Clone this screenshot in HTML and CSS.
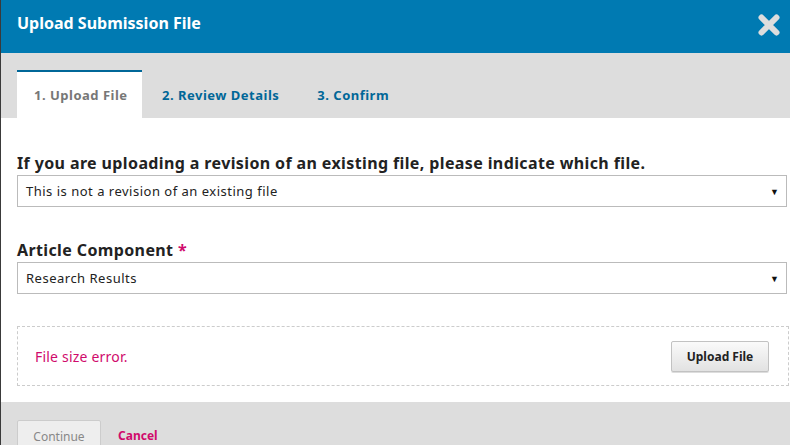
FILE: index.html
```html
<!DOCTYPE html>
<html>
<head>
<meta charset="utf-8">
<link rel="stylesheet" href="styles.css">
</head>
<body>
<div class="modal">
  <header class="header">
    <h1 class="title">Upload Submission File</h1>
    <button class="close" aria-label="Close">
      <svg width="24" height="24" viewBox="0 0 24 24"><path d="M4.5 4.5 L19.5 19.5 M19.5 4.5 L4.5 19.5" stroke="#dddddd" stroke-width="6" stroke-linecap="round"/></svg>
    </button>
  </header>
  <nav class="tabs">
    <div class="tab active">1. Upload File</div>
    <div class="tab">2. Review Details</div>
    <div class="tab">3. Confirm</div>
  </nav>
  <main class="content">
    <div class="field">
      <label class="label">If you are uploading a revision of an existing file, please indicate which file.</label>
      <div class="select"><span>This is not a revision of an existing file</span><span class="arrow">▼</span></div>
    </div>
    <div class="field">
      <label class="label">Article Component <span class="req">*</span></label>
      <div class="select"><span>Research Results</span><span class="arrow">▼</span></div>
    </div>
    <div class="upload">
      <span class="error">File size error.</span>
      <button class="btn-upload">Upload File</button>
    </div>
  </main>
  <footer class="footer">
    <button class="btn-continue">Continue</button>
    <a class="cancel">Cancel</a>
  </footer>
</div>
</body>
</html>
```
FILE: styles.css
```css
* { box-sizing: border-box; }
html, body { margin: 0; padding: 0; }
body {
  font-family: "Noto Sans", "Open Sans", sans-serif;
  background: #dddddd;
  width: 790px;
  height: 445px;
  overflow: hidden;
}
.modal {
  border-left: 1px solid #3a3a3a;
  height: 445px;
  display: flex;
  flex-direction: column;
}
.modal > * { flex-shrink: 0; }
.header {
  background: #007ab2;
  height: 53px;
  display: flex;
  align-items: center;
  justify-content: space-between;
  padding: 0 9px 0 16px;
}
.title {
  margin: 0;
  color: #fff;
  font-size: 16px;
  font-weight: 700;
  margin-top: -8px;
}
.close {
  background: none;
  border: 0;
  padding: 0;
  width: 24px;
  height: 24px;
  margin-top: -4px;
  display: flex;
}
.tabs {
  display: flex;
  align-items: flex-end;
  height: 65px;
  padding-left: 16px;
}
.tab {
  height: 48px;
  display: flex;
  align-items: center;
  white-space: nowrap;
  font-size: 13px;
  letter-spacing: 0.5px;
  font-weight: 700;
  color: #006798;
  border-top: 2px solid transparent;
  padding: 0 18px 0 20px;
}
.tab.active {
  background: #fff;
  color: #777;
  border-top-color: #006798;
  padding: 0 0 0 17px;
  width: 125px;
}
.content {
  background: #fff;
  padding: 34px 3px 16px 16px;
  display: flex;
  flex-direction: column;
}
.field { margin-bottom: 32px; }
.label {
  display: block;
  font-size: 16px;
  letter-spacing: 0.38px;
  font-weight: 700;
  color: #222;
  margin-bottom: 1px;
  line-height: 22px;
}
.req { color: #d00a6c; }
.select {
  height: 32px;
  border: 1px solid #bbb;
  display: flex;
  align-items: center;
  justify-content: space-between;
  padding: 0 7px 0 8px;
  font-size: 13px;
  letter-spacing: 0.5px;
  color: #222;
}
.arrow { font-size: 9px; color: #111; letter-spacing: 0; }
.upload {
  border: 1px dashed #ccc;
  height: 60px;
  display: flex;
  align-items: center;
  justify-content: space-between;
  padding: 0 19px 0 17px;
  margin-right: -2px;
}
.error { color: #d00a6c; font-size: 14px; letter-spacing: 0.2px; }
.btn-upload {
  font-family: inherit;
  font-size: 12px;
  font-weight: 700;
  color: #222;
  width: 98px;
  height: 31px;
  background: linear-gradient(#fafafa, #e2e2e2);
  border: 1px solid #c2c2c2;
  border-radius: 2px;
  box-shadow: 0 1px 0 #ddd;
}
.footer {
  flex: 1 1 auto;
  display: flex;
  align-items: flex-start;
  padding: 18px 16px 0 16px;
  gap: 17px;
}
.btn-continue {
  font-family: inherit;
  font-size: 12px;
  color: #888;
  width: 84px;
  height: 32px;
  background: #eee;
  border: 1px solid #ccc;
  border-radius: 2px;
}
.cancel {
  color: #d00a6c;
  font-size: 12px;
  font-weight: 700;
  line-height: 32px;
}
```
